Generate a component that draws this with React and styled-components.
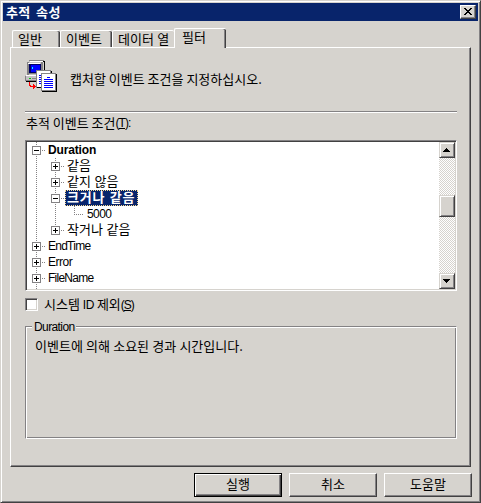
import React from 'react';
import styled, { createGlobalStyle, css } from 'styled-components';

const face = '#d6d3ce';
const shade = '#848284';
const dark = '#424142';
const navy = '#08246b';

const GlobalStyle = createGlobalStyle`
  * { box-sizing: border-box; }
  body {
    margin: 0;
    background: ${face};
    color: #000;
    font: 13px/16px 'Liberation Sans', 'Noto Sans CJK KR', sans-serif;
    overflow: hidden;
  }
`;

const raised = css`
  border: 1px solid;
  border-color: #fff ${dark} ${dark} #fff;
  box-shadow: inset -1px -1px ${shade};
  background: ${face};
`;
const sunken = css`
  border: 1px solid;
  border-color: ${shade} #fff #fff ${shade};
  box-shadow: inset 1px 1px ${dark}, inset -1px -1px ${face};
  background: #fff;
`;

const Dialog = styled.div`
  width: 481px;
  height: 503px;
  display: flex;
  flex-direction: column;
  padding: 2px;
  background: ${face};
  border: 1px solid;
  border-color: ${face} ${dark} ${dark} ${face};
  box-shadow: inset 1px 1px #fff, inset -1px -1px ${shade};
`;

const TitleBar = styled.header`
  height: 18px;
  flex: none;
  display: flex;
  align-items: center;
  justify-content: space-between;
  padding: 0 2px 0 3px;
  background: ${navy};
  color: #fff;
`;

const CloseButton = styled.button`
  ${raised}
  width: 16px;
  height: 14px;
  padding: 0 1px 1px 0;
  display: grid;
  place-items: center;
`;

const Label = styled.span`
  font-family: 'Noto Sans CJK KR', sans-serif;
  font-size: 13px;
  line-height: 16px;
  font-weight: ${p => (p.$bold ? 700 : 400)};
  letter-spacing: ${p => p.$track ?? 0}px;
  word-spacing: ${p => p.$space ?? 0.5}px;
  white-space: pre;
`;

const TreeLabel = styled(Label)`
  font-family: 'Liberation Sans', 'Noto Sans CJK KR', sans-serif;
  line-height: ${p => (p.$bold ? 14 : 16)}px;
  word-spacing: 0;
`;

const Latin = styled.span`
  font-family: 'Liberation Sans', sans-serif;
  font-size: 12px;
  line-height: 16px;
  font-weight: ${p => (p.$bold ? 700 : 400)};
  letter-spacing: ${p => p.$track ?? -0.4}px;
  white-space: pre;
`;

const TabList = styled.nav`
  height: 20px;
  flex: none;
  display: flex;
  align-items: flex-end;
  margin: 7px 0 -1px 9px;
  z-index: 1;
`;

const Tab = styled.div`
  width: ${p => p.$width}px;
  height: ${p => (p.$active ? 20 : 17)}px;
  margin-bottom: ${p => (p.$active ? 0 : 1)}px;
  padding: ${p => (p.$active ? '0 0 0 7px' : '0 0 0 5px')};
  line-height: 14px;
  background: ${face};
  border: solid #fff;
  border-width: 1px 0 0 1px;
  border-radius: 2px 2px 0 0;
  box-shadow: ${p => (p.$joined ? 'none' : `inset -1px 0 ${dark}, inset -2px 0 ${shade}`)};
`;

const Panel = styled.main`
  width: 461px;
  height: 420px;
  flex: none;
  margin-left: 7px;
  padding: 12px 13px 0 14px;
  display: flex;
  flex-direction: column;
  ${raised}
`;

const Intro = styled.div`
  height: 51px;
  flex: none;
  display: flex;
  gap: 11px;
`;
const IntroText = styled(Label)`
  margin-top: 11px;
`;

const Rule = styled.hr`
  width: 432px;
  height: 2px;
  flex: none;
  margin: 0;
  border: 0;
  background: linear-gradient(${shade} 50%, #fff 50%);
`;

const Caption = styled.div`
  height: 27px;
  flex: none;
  padding-top: 2px;
  display: flex;
  align-items: flex-start;
  padding-left: 1px;
`;

const TreeFrame = styled.div`
  ${sunken}
  height: 151px;
  width: 432px;
  flex: none;
  display: flex;
  padding: 1px;
`;
const Tree = styled.div`
  flex: 1;
  height: 147px;
  overflow: hidden;
`;
const TreeRow = styled.div`
  height: 16px;
  display: flex;
`;

const dotsDown = `repeating-linear-gradient(${shade} 0 1px, transparent 1px 2px)`;
const dotsAcross = `repeating-linear-gradient(90deg, ${shade} 0 1px, transparent 1px 2px)`;
const guides = {
  line: `${dotsDown} 9px 0 / 1px 16px no-repeat`,
  tee: `${dotsDown} 9px 0 / 1px 16px no-repeat, ${dotsAcross} 9px 8px / 9px 1px no-repeat`,
  elbow: `${dotsDown} 9px 0 / 1px 8px no-repeat, ${dotsAcross} 9px 8px / 11px 1px no-repeat`,
};
const Guide = styled.span`
  width: 19px;
  height: 16px;
  flex: none;
  padding: 4px 0 0 5px;
  background: ${p => guides[p.$kind]};
`;
const Expander = styled.span`
  display: block;
  width: 9px;
  height: 9px;
  border: 1px solid ${shade};
  background:
    linear-gradient(#000, #000) 1px 3px / 5px 1px no-repeat,
    ${p => (p.$open ? '' : 'linear-gradient(#000, #000) 3px 1px / 1px 5px no-repeat,')}
    #fff;
`;
const NodeText = styled.span`
  height: 16px;
  padding: 0 ${p => (p.$leaf ? 3 : 2)}px;
  display: flex;
  ${p => p.$selected && css`
    width: 73px;
    padding: 0 1px;
    color: #fff;
    background: ${navy};
    border: 1px dotted #f7db94;
  `}
`;

const ScrollBar = styled.div`
  width: 16px;
  height: 147px;
  display: flex;
  flex-direction: column;
  background: repeating-conic-gradient(${face} 0 25%, #fff 0 50%) 0 0 / 2px 2px;
`;
const scrollRaised = css`
  border: 1px solid;
  border-color: ${face} ${dark} ${dark} ${face};
  box-shadow: inset 1px 1px #fff, inset -1px -1px ${shade};
  background: ${face};
`;
const ScrollButton = styled.button`
  ${scrollRaised}
  width: 16px;
  height: 16px;
  padding: 0;
  display: grid;
  place-items: center;
`;
const Thumb = styled.div`
  ${scrollRaised}
  height: 22px;
  margin: 37px 0 56px;
`;

const CheckRow = styled.label`
  height: 16px;
  flex: none;
  margin-top: 5px;
  display: flex;
  align-items: center;
  gap: 6px;
`;
const CheckBox = styled.span`
  ${sunken}
  width: 13px;
  height: 13px;
  margin-top: 1px;
`;

const Group = styled.section`
  width: 432px;
  height: 113px;
  flex: none;
  margin-top: 14px;
  padding: 0 0 0 6px;
  border: 1px solid;
  border-color: ${shade} #fff #fff ${shade};
  box-shadow: inset 1px 1px #fff, inset -1px -1px ${shade};
`;
const Legend = styled.div`
  width: 44px;
  height: 16px;
  margin-top: -8px;
  padding-left: 2px;
  background: ${face};
`;
const GroupText = styled.p`
  margin: 3px 0 0 3px;
`;

const Footer = styled.footer`
  display: flex;
  justify-content: flex-end;
  gap: 7px;
  margin: 6px 6px 0 0;
`;
const Button = styled.button`
  width: 88px;
  height: 24px;
  padding: 0 0 3px;
  color: #000;
  ${raised}
  ${p => p.$primary && css`
    border-color: #000;
    box-shadow: inset 1px 1px #fff, inset -1px -1px ${dark}, inset -2px -2px ${shade};
  `}
`;

function TraceIcon() {
  return (
    <svg width="34" height="34" viewBox="0 0 34 34" shapeRendering="crispEdges">
      <path fill="#848284" d="M4 0h15v1H4zM2 2h2v13H2z" />
      <path fill="#c6c3c6" d="M4 1h14v14H4z" />
      <path fill="#fff" d="M5 1h13v1H5zM3 3h12v1H3z" />
      <path fill="#848284" d="M16 2h2v13h-2zM3 13h13v1H3z" />
      <path fill="#000" d="M19 1h1v14h-1zM18 1h1v1h-1zM3 15h16v1H3z" />
      <path fill="#000063" d="M4 4h12v9H4z" />
      <path fill="#00f" d="M6 5h9v7H6z" />
      <path fill="#0ff" d="M7 7h1v2H7z" />
      <path fill="#c6c3c6" d="M0 15h14v6H0z" />
      <path fill="#fff" d="M1 15h13v1H1z" />
      <path fill="#848284" d="M0 16h1v5H0zM1 20h13v1H1zM7 18h5v1H7z" />
      <path fill="#0c0" d="M4 18h2v1H4z" />
      <path fill="#000" d="M1 21h12v1H1z" />
      <path fill="red" d="M4 22h1v4H4zM5 25h1v2H5zM6 26h5v1H6zM8 24h1v5H8zM9 25h1v3H9z" />
      <path fill="#848284" d="M11 10h15v18H11z" />
      <path fill="#fff" d="M12 11h13v16H12z" />
      <path fill="#000" d="M12 27h5v1h-5zM26 11h1v3h-1z" />
      <path fill="#00f" d="M14 15h2v1h-2zM14 17h2v1h-2zM14 19h2v1h-2zM14 21h2v1h-2zM14 23h2v1h-2z" />
      <path fill="#000" d="M17 14h15v18H17z" />
      <path fill="#848284" d="M16 13h15v18H16z" />
      <path fill="#fff" d="M17 14h13v16H17z" />
      <path fill="#00f" d="M22 17h3v1h-3zM19 19h9v1h-9zM19 21h9v1h-9zM19 23h9v1h-9zM19 25h9v1h-9zM19 27h9v1h-9z" />
    </svg>
  );
}

const Arrow = ({ down }) => (
  <svg width="8" height="4" viewBox="0 0 8 4" shapeRendering="crispEdges">
    <path d={down ? 'M0 0h7v1H0zM1 1h5v1H1zM2 2h3v1H2zM3 3h1v1H3z' : 'M3 0h1v1H3zM2 1h3v1H2zM1 2h5v1H1zM0 3h7v1H0z'} />
  </svg>
);

const nodes = [
  { guides: [], box: 'open', kind: 'tee', text: 'Duration', latin: true, bold: true },
  { guides: ['line'], box: 'closed', kind: 'tee', text: '같음' },
  { guides: ['line'], box: 'closed', kind: 'tee', text: '같지 않음' },
  { guides: ['line'], box: 'open', kind: 'tee', text: '크거나 같음', selected: true, bold: true },
  { guides: ['line', 'line'], kind: 'elbow', text: '5000', latin: true, track: -0.6 },
  { guides: ['line'], box: 'closed', kind: 'elbow', text: '작거나 같음' },
  { guides: [], box: 'closed', kind: 'tee', text: 'EndTime', latin: true },
  { guides: [], box: 'closed', kind: 'tee', text: 'Error', latin: true, track: -0.5 },
  { guides: [], box: 'closed', kind: 'tee', text: 'FileName', latin: true },
];

function TreeNode({ node }) {
  return (
    <TreeRow>
      {node.guides.map((g, i) => <Guide key={i} $kind={g} />)}
      <Guide $kind={node.kind}>{node.box && <Expander $open={node.box === 'open'} />}</Guide>
      <NodeText $selected={node.selected} $leaf={!node.box}>
        {node.latin
          ? <Latin $bold={node.bold} $track={node.bold ? -0.15 : node.track ?? -0.75}>{node.text}</Latin>
          : <TreeLabel $bold={node.bold} $track={node.selected ? 0.8 : 0}>{node.text}</TreeLabel>}
      </NodeText>
    </TreeRow>
  );
}

export default function App() {
  return (
    <>
      <GlobalStyle />
      <Dialog>
        <TitleBar>
          <Label $bold $space={2} $track={0.4}>추적 속성</Label>
          <CloseButton aria-label="닫기">
            <svg width="8" height="7" viewBox="0 0 8 7" shapeRendering="crispEdges">
              <path d="M0 0h2v1H0zM6 0h2v1H6zM1 1h2v1H1zM5 1h2v1H5zM2 2h4v1H2zM3 3h2v1H3zM2 4h4v1H2zM1 5h2v1H1zM5 5h2v1H5zM0 6h2v1H0zM6 6h2v1H6z" />
            </svg>
          </CloseButton>
        </TitleBar>
        <TabList>
          <Tab $width={48}><Label>일반</Label></Tab>
          <Tab $width={52}><Label>이벤트</Label></Tab>
          <Tab $width={62} $joined><Label>데이터 열</Label></Tab>
          <Tab $width={52} $active><Label>필터</Label></Tab>
        </TabList>
        <Panel>
          <Intro>
            <TraceIcon />
            <IntroText $space={0}>캡처할 이벤트 조건을 지정하십시오.</IntroText>
          </Intro>
          <Rule />
          <Caption>
            <Label $space={0}>추적 이벤트 조건</Label>
            <Latin $track={-0.95}>(<u>T</u>):</Latin>
          </Caption>
          <TreeFrame>
            <Tree>
              {nodes.map(n => <TreeNode key={n.text} node={n} />)}
              <TreeRow><Guide $kind="line" /></TreeRow>
            </Tree>
            <ScrollBar>
              <ScrollButton aria-label="위로"><Arrow /></ScrollButton>
              <Thumb />
              <ScrollButton aria-label="아래로"><Arrow down /></ScrollButton>
            </ScrollBar>
          </TreeFrame>
          <CheckRow>
            <CheckBox />
            <span>
              <Label $space={0}>시스템 </Label><Latin>ID</Latin><Label $space={0}> 제외</Label>
              <Latin $track={-1}>(<u>S</u>)</Latin>
            </span>
          </CheckRow>
          <Group>
            <Legend><Latin $track={-0.6}>Duration</Latin></Legend>
            <GroupText><Label $space={0.3}>이벤트에 의해 소요된 경과 시간입니다.</Label></GroupText>
          </Group>
        </Panel>
        <Footer>
          <Button $primary><Label>실행</Label></Button>
          <Button><Label>취소</Label></Button>
          <Button><Label>도움말</Label></Button>
        </Footer>
      </Dialog>
    </>
  );
}
